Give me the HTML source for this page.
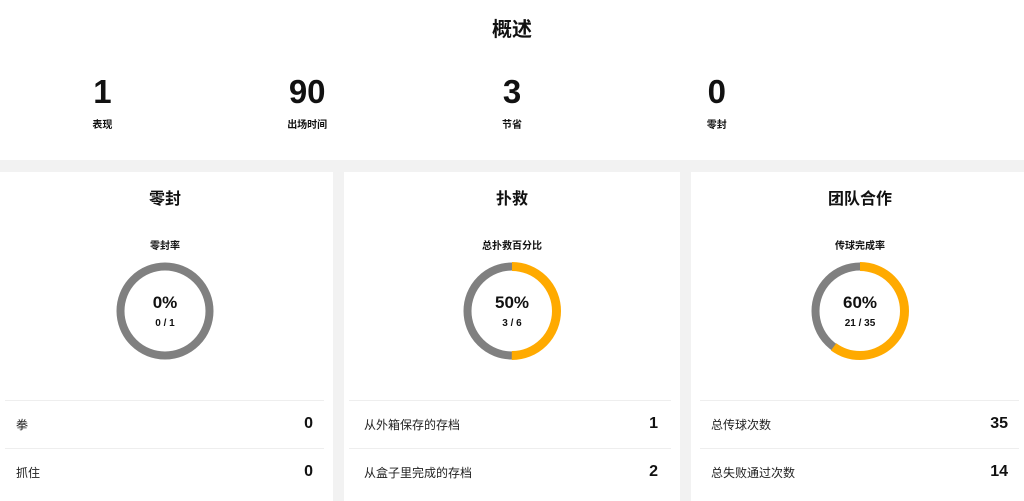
<!DOCTYPE html>
<html><head><meta charset="utf-8"><style>
*{margin:0;padding:0;box-sizing:border-box}
body{width:1024px;height:501px;overflow:hidden;background:#f2f2f2;font-family:"Liberation Sans","Noto Sans CJK SC",sans-serif;color:#111}
.top{position:absolute;left:0;top:0;width:1024px;height:160px;background:#fff}
.title{position:absolute;top:13px;width:1024px;text-align:center;font-size:20px;font-weight:bold}
.stat{position:absolute;top:72px;width:204.8px;text-align:center}
.stat .n{font-size:33px;font-weight:bold;line-height:40px}
.stat .l{font-size:10px;font-weight:bold;margin-top:4px}
.card{position:absolute;top:172px;height:329px;background:#fff;width:336px}
.card h2{position:absolute;top:13px;width:100%;text-align:center;font-size:16px;font-weight:bold}
.card .sub{position:absolute;top:65px;width:100%;text-align:center;font-size:10px;font-weight:bold}
.card svg{position:absolute;top:89px;left:50%;margin-left:-50px}
.card .pc{position:absolute;top:121px;width:100%;text-align:center;font-size:17px;font-weight:bold}
.card .fr{position:absolute;top:146px;width:100%;text-align:center;font-size:10px;font-weight:bold}
.row{position:absolute;left:5px;right:9px;height:47px;border-top:1px solid #eee;font-size:12px;color:#222}
.row span{position:absolute;left:11px;top:15px}
.row b{position:absolute;right:11px;top:14px;font-size:16px;color:#111}
</style></head><body>
<div class="top">
<div class="title">概述</div>
<div class="stat" style="left:0"><div class="n">1</div><div class="l">表现</div></div>
<div class="stat" style="left:204.8px"><div class="n">90</div><div class="l">出场时间</div></div>
<div class="stat" style="left:409.6px"><div class="n">3</div><div class="l">节省</div></div>
<div class="stat" style="left:614.4px"><div class="n">0</div><div class="l">零封</div></div>
</div>

<div class="card" style="left:-3px">
<h2>零封</h2><div class="sub">零封率</div>
<svg width="100" height="100"><circle cx="50" cy="50" r="44.5" fill="none" stroke="#808080" stroke-width="8"/></svg>
<div class="pc">0%</div><div class="fr">0 / 1</div>
<div class="row" style="top:228px;left:8px;right:9px"><span>拳</span><b>0</b></div>
<div class="row" style="top:276px;left:8px;right:9px"><span>抓住</span><b>0</b></div>
</div>

<div class="card" style="left:344px">
<h2>扑救</h2><div class="sub">总扑救百分比</div>
<svg width="100" height="100"><circle cx="50" cy="50" r="44.5" fill="none" stroke="#808080" stroke-width="8"/><circle cx="50" cy="50" r="44.5" fill="none" stroke="#ffaa00" stroke-width="9" stroke-dasharray="139.8 400" transform="rotate(-90 50 50)"/></svg>
<div class="pc">50%</div><div class="fr">3 / 6</div>
<div class="row" style="top:228px"><span style="left:15px">从外箱保存的存档</span><b style="right:13px">1</b></div>
<div class="row" style="top:276px"><span style="left:15px">从盒子里完成的存档</span><b style="right:13px">2</b></div>
</div>

<div class="card" style="left:691px">
<h2 style="left:1px">团队合作</h2><div class="sub" style="left:1px">传球完成率</div>
<svg width="100" height="100" style="margin-left:-49px"><circle cx="50" cy="50" r="44.5" fill="none" stroke="#808080" stroke-width="8"/><circle cx="50" cy="50" r="44.5" fill="none" stroke="#ffaa00" stroke-width="9" stroke-dasharray="167.8 400" transform="rotate(-90 50 50)"/></svg>
<div class="pc" style="left:1px">60%</div><div class="fr" style="left:1px">21 / 35</div>
<div class="row" style="top:228px;left:9px;right:8px"><span>总传球次数</span><b>35</b></div>
<div class="row" style="top:276px;left:9px;right:8px"><span>总失败通过次数</span><b>14</b></div>
</div>
</body></html>
